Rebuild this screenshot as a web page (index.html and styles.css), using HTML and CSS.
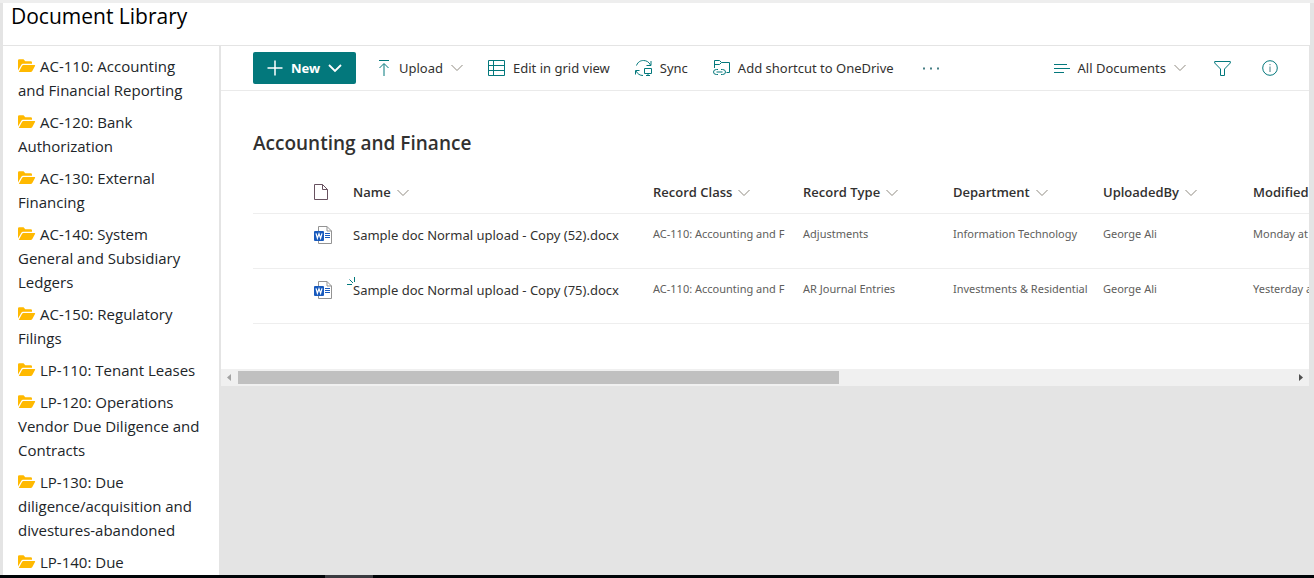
FILE: index.html
```html
<!DOCTYPE html>
<html lang="en">
<head>
<meta charset="utf-8">
<title>Document Library</title>
<link rel="stylesheet" href="styles.css">
</head>
<body>
<svg class="defs" aria-hidden="true">
  <symbol id="folder" viewBox="0 0 18 14"><path fill="#ffb900" d="M0 11.500V1.500Q0 .3 1.300 .3H5.500L7.300 2.200H12.700Q14 2.200 14 3.500V4.800H5Q3.900 4.800 3.200 5.900Z"/><path fill="#ffb900" d="M.8 13 4 7Q4.500 6 5.500 6H16.500Q17.600 6 17 7L14.300 12Q13.700 13 12.700 13Z"/></symbol>
  <symbol id="chevron" viewBox="0 0 12 8"><path fill="none" stroke="currentColor" d="M.5 1 6 6.500 11.500 1"/></symbol>
  <symbol id="word" viewBox="0 0 18 18"><path fill="#fff" stroke="#939393" d="M4.500 .5H13L17.500 5V17.500H4.500Z"/><path fill="none" stroke="#939393" d="M13 .5V5H17.500"/><path stroke="#185abd" d="M11 7.500H16M11 9.500H16M11 11.500H16"/><rect y="5" width="10" height="10" rx="1" fill="#185abd"/><path fill="none" stroke="#fff" stroke-width="1.200" d="M2 7.300 3.400 12.200 5 7.800 6.600 12.200 8 7.300"/></symbol>
</svg>
<div class="page">
  <header class="titlebar"><h1>Document Library</h1></header>
  <div class="body">
    <nav class="sidebar">
      <a href="#"><svg class="folder"><use href="#folder"/></svg>AC-110: Accounting and Financial Reporting</a>
      <a href="#"><svg class="folder"><use href="#folder"/></svg>AC-120: Bank Authorization</a>
      <a href="#"><svg class="folder"><use href="#folder"/></svg>AC-130: External Financing</a>
      <a href="#"><svg class="folder"><use href="#folder"/></svg>AC-140: System General and Subsidiary Ledgers</a>
      <a href="#"><svg class="folder"><use href="#folder"/></svg>AC-150: Regulatory Filings</a>
      <a href="#"><svg class="folder"><use href="#folder"/></svg>LP-110: Tenant Leases</a>
      <a href="#"><svg class="folder"><use href="#folder"/></svg>LP-120: Operations Vendor Due Diligence and Contracts</a>
      <a href="#"><svg class="folder"><use href="#folder"/></svg>LP-130: Due diligence/acquisition and divestures-abandoned</a>
      <a href="#"><svg class="folder"><use href="#folder"/></svg>LP-140: Due</a>
    </nav>
    <main class="library">
      <div class="toolbar">
        <button class="new"><svg width="16" height="16" viewBox="0 0 16 16"><path stroke="#fff" stroke-width="1.500" d="M8 .5V15.500M.5 8H15.500"/></svg>New<svg width="14" height="9" viewBox="0 0 14 9"><path fill="none" stroke="#fff" stroke-width="1.800" d="M1 1 7 7 13 1"/></svg></button>
        <button class="cmd upload"><svg width="13" height="16" viewBox="0 0 13 16"><path fill="none" stroke="#03787c" d="M1 .5H11M6 4V16M1.500 8 6 3.500 10.500 8"/></svg>Upload<svg class="chev"><use href="#chevron"/></svg></button>
        <button class="cmd grid"><svg width="17" height="16" viewBox="0 0 17 16"><path fill="none" stroke="#03787c" d="M.5 .5H16.500V15.500H.5ZM.5 5.500H16.500M.5 10.500H16.500M5.500 .5V15.500"/></svg>Edit in grid view</button>
        <button class="cmd sync"><svg width="17" height="16" viewBox="0 0 17 16"><path fill="none" stroke="#03787c" d="M1.500 5.500C3 1.500 6 .5 8.500 .5 11.500 .5 14 2 15.500 5M16 1V5.500H11.500M.5 14.500V10.500H4.500M1 11C2.500 14 5 15.500 8 15.500M9.500 8.500H16.500V13.500H9.500ZM13 13.500V15.500M11 15.500H15"/></svg>Sync</button>
        <button class="cmd shortcut"><svg width="17" height="16" viewBox="0 0 17 16"><path fill="none" stroke="#03787c" d="M1.500 8V.5H6.500L8.500 2.500H16.500V12.500H13.500M1.500 4.500H6.500L8.500 2.500M5 9.500H3.500Q.5 9.500 .5 12T3.500 14.500H5M8 9.500H9.500Q12.500 9.500 12.500 12T9.500 14.500H8M3.500 12H9.500"/></svg>Add shortcut to OneDrive</button>
        <button class="cmd more" aria-label="More"><svg width="16" height="3" viewBox="0 0 16 3"><path fill="#477f85" d="M0 .5H2V2.500H0ZM7 .5H9V2.500H7ZM14 .5H16V2.500H14Z"/></svg></button>
        <button class="cmd view"><svg width="16" height="11" viewBox="0 0 16 11"><path stroke="#03787c" d="M0 1.500H13M0 5.500H16M0 9.500H10"/></svg>All Documents<svg class="chev"><use href="#chevron"/></svg></button>
        <button class="cmd filter" aria-label="Filter"><svg width="17" height="15" viewBox="0 0 17 15"><path fill="none" stroke="#03787c" d="M.7 .5H16.300V2L10.500 8V14.500H6.500V8L.7 2Z"/></svg></button>
        <button class="cmd" aria-label="Details"><svg width="16" height="16" viewBox="0 0 16 16"><circle cx="8" cy="8" r="7.300" fill="none" stroke="#03787c"/><path stroke="#477f85" d="M8 6.500V12M8 4V5.200"/></svg></button>
      </div>
      <div class="viewport">
        <h2>Accounting and Finance</h2>
        <table>
          <colgroup><col class="c-icon"><col class="c-name"><col class="c-meta"><col class="c-meta"><col class="c-meta"><col class="c-meta"><col class="c-meta"></colgroup>
          <thead><tr>
            <th class="icon"><svg width="14" height="16" viewBox="0 0 14 16"><path fill="none" stroke="#67515f" d="M.5 .5H8.500L13.500 5.500V15.500H.5ZM8.500 .5V5.500H13.500"/></svg></th>
            <th>Name<svg class="chev"><use href="#chevron"/></svg></th>
            <th>Record Class<svg class="chev"><use href="#chevron"/></svg></th>
            <th>Record Type<svg class="chev"><use href="#chevron"/></svg></th>
            <th>Department<svg class="chev"><use href="#chevron"/></svg></th>
            <th>UploadedBy<svg class="chev"><use href="#chevron"/></svg></th>
            <th>Modified<svg class="chev"><use href="#chevron"/></svg></th>
          </tr></thead>
          <tbody>
            <tr><td class="icon"><svg width="18" height="18"><use href="#word"/></svg></td><td class="name"><a href="#">Sample doc Normal upload - Copy (52).docx</a></td><td>AC-110: Accounting and F</td><td>Adjustments</td><td>Information Technology</td><td>George Ali</td><td>Monday at</td></tr>
            <tr><td class="icon"><svg width="18" height="18"><use href="#word"/></svg></td><td class="name"><a href="#"><svg class="spark" width="8" height="8" viewBox="0 0 8 8"><path stroke="#03787c" d="M0 7.500H5M2.500 2.500 6 6M7.500 0V5"/></svg>Sample doc Normal upload - Copy (75).docx</a></td><td>AC-110: Accounting and F</td><td>AR Journal Entries</td><td>Investments &amp; Residential</td><td>George Ali</td><td>Yesterday a</td></tr>
          </tbody>
        </table>
      </div>
      <div class="scrollbar"><svg width="17" height="17" viewBox="0 0 17 17"><path fill="#a3a3a3" d="M10 5V12L6 8.500Z"/></svg><div class="track"><div class="thumb"></div></div><svg width="17" height="17" viewBox="0 0 17 17"><path fill="#505050" d="M7 5V12L11 8.500Z"/></svg></div>
    </main>
  </div>
  <footer class="taskbar"><span></span></footer>
</div>
</body>
</html>
```
FILE: styles.css
```css
* { box-sizing: border-box; }
body { margin: 0; font-family: "Segoe UI", "Open Sans", "Noto Sans", sans-serif; color: #323130; background: #e4e4e4; }
.defs { position: absolute; width: 0; height: 0; }
a { color: inherit; text-decoration: none; }
button { border: 0; background: none; font: inherit; color: inherit; padding: 0; }
.page { display: flex; flex-direction: column; height: 100vh; overflow: hidden; border-top: 3px solid #eee; }
.titlebar { flex: none; height: 43px; margin: 0 4px 0 3px; padding-left: 8px; background: #fff; border-bottom: 1px solid #e4e4e4; }
h1 { margin: 0; font-size: 21px; line-height: 26px; font-weight: 400; color: #000; }
.body { flex: 1; min-height: 0; display: flex; align-items: flex-start; gap: 2px; padding: 0 5px 0 3px; }
.sidebar { flex: none; width: 216px; height: 100%; overflow: hidden; background: #fff; padding: 8px 15px; font-size: 15px; line-height: 24px; color: #212529; }
.sidebar a { display: block; margin-bottom: 8px; }
.folder { width: 18px; height: 14px; margin-right: 4px; vertical-align: -1px; }
.library { flex: 1; min-width: 0; background: #fff; }
.toolbar { display: flex; align-items: center; height: 45px; padding: 0 31px 0 32px; border-bottom: 1px solid #eaeaea; font-family: "Segoe UI", "Noto Sans", sans-serif; font-size: 13px; white-space: nowrap; }
.cmd { display: flex; align-items: center; gap: 8px; }
.cmd > svg { flex: none; }
.chev { width: 12px; height: 8px; color: #8f8a80; }
.new { display: flex; align-items: center; justify-content: center; gap: 8px; width: 103px; height: 32px; background: #03787c; color: #fff; border-radius: 2px; font-weight: 700; }
.upload { margin-left: 22px; }
.grid, .sync, .shortcut { margin-left: 25px; }
.more { margin-left: 29px; }
.view { margin-left: auto; }
.filter { margin: 0 31px 0 28px; }
.viewport { height: 278px; padding: 39px 0 0 32px; overflow: hidden; }
h2 { margin: 0; font-size: 19px; line-height: 26px; font-weight: 600; }
table { margin-top: 15px; width: 1150px; table-layout: fixed; border-collapse: collapse; font-size: 13px; }
.c-icon { width: 100px; }
.c-name { width: 300px; }
.c-meta { width: 150px; }
th { height: 42px; padding: 0; text-align: left; font-weight: 600; white-space: nowrap; }
th .chev { margin-left: 6px; }
tr { border-bottom: 1px solid #eee; }
td { height: 55px; padding: 11px 12px 0 0; vertical-align: top; font-family: "Segoe UI", "Noto Sans", sans-serif; font-size: 11px; line-height: 18px; color: #605e5c; white-space: nowrap; }
td.name { font-size: 13px; line-height: 20px; color: #323130; }
.name a { position: relative; }
.spark { position: absolute; left: -6px; top: -4px; }
.icon { padding-left: 61px; }
td.icon { padding-top: 12px; }
.icon svg { display: block; }
.scrollbar { display: flex; height: 17px; background: #f0f0f0; }
.track { flex: 1; padding: 2px 0; }
.thumb { width: 57%; height: 13px; background: #c0c0c0; }
.taskbar { flex: none; height: 3px; background: #000407; padding-left: 325px; }
.taskbar span { display: block; width: 48px; height: 3px; background: #3a3b40; }
```
